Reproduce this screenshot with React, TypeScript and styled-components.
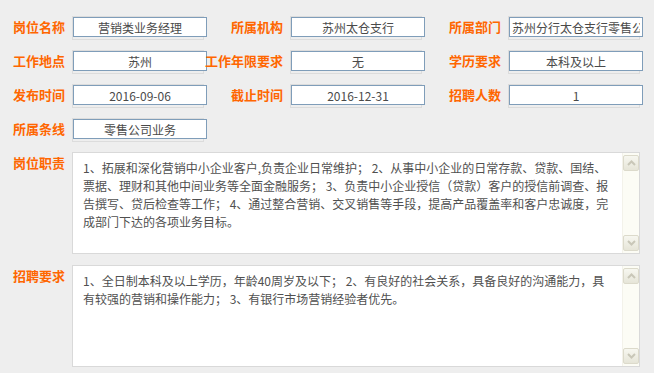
import React from "react";
import styled, { createGlobalStyle } from "styled-components";

const GlobalStyle = createGlobalStyle`
  html, body {
    margin: 0;
    padding: 0;
    background: #eeeeee;
  }
  body {
    font-family: "Noto Sans CJK SC", "Noto Sans", sans-serif;
  }
`;

const Page = styled.div`
  width: 654px;
  height: 373px;
  padding-top: 16px;
  box-sizing: border-box;
  background: #eeeeee;
  display: flex;
  flex-direction: column;
  gap: 10px;
  overflow: hidden;
`;

const FieldGrid = styled.div`
  display: grid;
  grid-template-columns: 72px 132px 86px 132px 86px 132px;
  grid-auto-rows: 24px;
  row-gap: 10px;
`;

const Label = styled.div`
  color: #ff6600;
  font-family: "Noto Sans CJK SC", sans-serif;
  font-size: 13px;
  font-weight: 700;
  line-height: 20px;
  text-align: right;
  padding-right: 7px;
  white-space: nowrap;
  align-self: start;
  margin-top: 1px;
`;

const FieldFrame = styled.div`
  width: 132px;
  height: 24px;
  box-sizing: border-box;
  border: 1px solid #dcdcdc;
`;

const Input = styled.input<{ $align?: "left" | "center" }>`
  display: block;
  width: 134px;
  height: 20px;
  box-sizing: border-box;
  margin: 0;
  border: 1px solid #7f9db9;
  background: #ffffff;
  padding: 0 2px;
  font-family: "Noto Sans CJK SC", sans-serif;
  font-size: 12px;
  color: #4a4a4a;
  text-align: ${(p) => (p.$align === "left" ? "left" : "center")};
  outline: none;
`;

const LongRows = styled.div`
  display: grid;
  grid-template-columns: 72px 568px;
  row-gap: 11px;
`;

const TextBox = styled.div`
  width: 568px;
  height: 102px;
  box-sizing: border-box;
  border: 1px solid #d9d9d9;
  background: #ffffff;
  display: flex;
`;

const TextArea = styled.textarea`
  flex: 1;
  min-width: 0;
  margin: 0;
  border: none;
  outline: none;
  resize: none;
  overflow: hidden;
  background: transparent;
  padding: 6px 9px 0 10px;
  font-family: "Noto Sans CJK SC", sans-serif;
  font-size: 12px;
  line-height: 18px;
  color: #505050;
`;

const ScrollBar = styled.div`
  width: 17px;
  box-sizing: border-box;
  padding: 2px 1px 2px 0;
  background: #fcfcf5;
  border-left: 1px solid #f3f2ea;
  display: flex;
  flex-direction: column;
  justify-content: space-between;
`;

const ScrollButton = styled.div`
  width: 16px;
  height: 16px;
  box-sizing: border-box;
  border: 1px solid #dcdacb;
  border-radius: 2px;
  background: linear-gradient(#f7f7f0, #e6e5d8);
  display: flex;
  align-items: center;
  justify-content: center;
`;

const Chevron = ({ dir }: { dir: "up" | "down" }) => (
  <svg width="9" height="6" viewBox="0 0 9 6">
    <path
      d={dir === "up" ? "M1 5 L4.5 1.5 L8 5" : "M1 1 L4.5 4.5 L8 1"}
      fill="none"
      stroke="#c9c7b8"
      strokeWidth="2"
    />
  </svg>
);

const fields: { label: string; value: string; align?: "left" | "center" }[] = [
  { label: "岗位名称", value: "营销类业务经理" },
  { label: "所属机构", value: "苏州太仓支行" },
  { label: "所属部门", value: "苏州分行太仓支行零售公司业务部", align: "left" },
  { label: "工作地点", value: "苏州" },
  { label: "工作年限要求", value: "无" },
  { label: "学历要求", value: "本科及以上" },
  { label: "发布时间", value: "2016-09-06" },
  { label: "截止时间", value: "2016-12-31" },
  { label: "招聘人数", value: "1" },
  { label: "所属条线", value: "零售公司业务" },
];

const longFields = [
  {
    label: "岗位职责",
    value:
      "1、拓展和深化营销中小企业客户,负责企业日常维护； 2、从事中小企业的日常存款、贷款、国结、票据、理财和其他中间业务等全面金融服务； 3、负责中小企业授信（贷款）客户的授信前调查、报告撰写、贷后检查等工作； 4、通过整合营销、交叉销售等手段，提高产品覆盖率和客户忠诚度，完成部门下达的各项业务目标。",
  },
  {
    label: "招聘要求",
    value:
      "1、全日制本科及以上学历，年龄40周岁及以下； 2、有良好的社会关系，具备良好的沟通能力，具有较强的营销和操作能力； 3、有银行市场营销经验者优先。",
  },
];

export default function App() {
  return (
    <>
      <GlobalStyle />
      <Page>
        <FieldGrid>
          {fields.map((f) => (
            <React.Fragment key={f.label}>
              <Label>{f.label}</Label>
              <FieldFrame>
                <Input readOnly value={f.value} $align={f.align} />
              </FieldFrame>
            </React.Fragment>
          ))}
        </FieldGrid>
        <LongRows>
          {longFields.map((f) => (
            <React.Fragment key={f.label}>
              <Label>{f.label}</Label>
              <TextBox>
                <TextArea readOnly value={f.value} />
                <ScrollBar>
                  <ScrollButton>
                    <Chevron dir="up" />
                  </ScrollButton>
                  <ScrollButton>
                    <Chevron dir="down" />
                  </ScrollButton>
                </ScrollBar>
              </TextBox>
            </React.Fragment>
          ))}
        </LongRows>
      </Page>
    </>
  );
}
